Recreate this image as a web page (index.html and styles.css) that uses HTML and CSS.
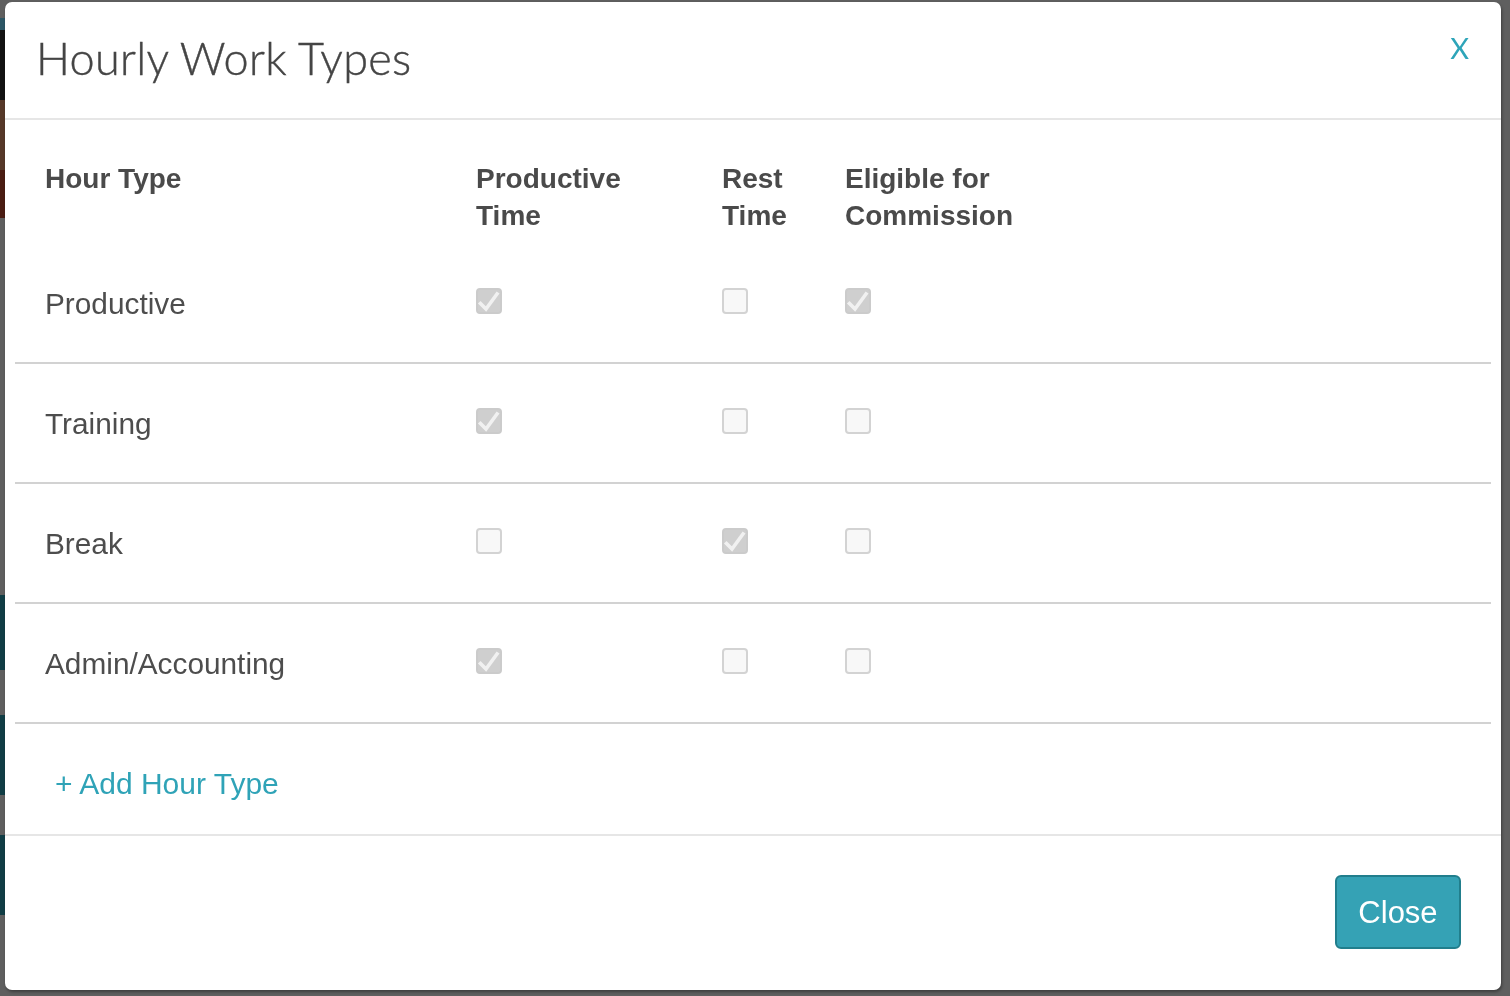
FILE: index.html
```html
<!DOCTYPE html>
<html lang="en">
<head>
<meta charset="utf-8">
<title>Hourly Work Types</title>
<link rel="stylesheet" href="styles.css">
</head>
<body>
<div class="page-under">
  <div class="strip">
    <div class="blk b-grey" style="height:18px"></div>
    <div class="blk b-blue" style="height:12px"></div>
    <div class="blk b-black" style="height:70px"></div>
    <div class="blk b-brown" style="height:70px"></div>
    <div class="blk b-red" style="height:48px"></div>
    <div class="blk b-grey" style="height:377px"></div>
    <div class="blk b-teal" style="height:75px"></div>
    <div class="blk b-grey" style="height:45px"></div>
    <div class="blk b-teal" style="height:80px"></div>
    <div class="blk b-grey" style="height:40px"></div>
    <div class="blk b-teal" style="height:80px"></div>
  </div>
</div>

<div class="modal">
  <div class="modal-header">
    <h1 class="modal-title">Hourly Work Types</h1>
    <button class="modal-x" type="button">X</button>
  </div>

  <div class="modal-body">
    <div class="trow thead">
      <div class="cell first">Hour Type</div>
      <div class="cell">Productive<br>Time</div>
      <div class="cell">Rest<br>Time</div>
      <div class="cell">Eligible for<br>Commission</div>
    </div>

    <div class="trow">
      <div class="cell first name">Productive</div>
      <div class="cell"><span class="cb on"><svg viewBox="0 0 26 26"><polyline points="4.5,15.5 10,21 21,6"/></svg></span></div>
      <div class="cell"><span class="cb"></span></div>
      <div class="cell"><span class="cb on"><svg viewBox="0 0 26 26"><polyline points="4.5,15.5 10,21 21,6"/></svg></span></div>
    </div>

    <div class="trow">
      <div class="cell first name">Training</div>
      <div class="cell"><span class="cb on"><svg viewBox="0 0 26 26"><polyline points="4.5,15.5 10,21 21,6"/></svg></span></div>
      <div class="cell"><span class="cb"></span></div>
      <div class="cell"><span class="cb"></span></div>
    </div>

    <div class="trow">
      <div class="cell first name">Break</div>
      <div class="cell"><span class="cb"></span></div>
      <div class="cell"><span class="cb on"><svg viewBox="0 0 26 26"><polyline points="4.5,15.5 10,21 21,6"/></svg></span></div>
      <div class="cell"><span class="cb"></span></div>
    </div>

    <div class="trow">
      <div class="cell first name">Admin/Accounting</div>
      <div class="cell"><span class="cb on"><svg viewBox="0 0 26 26"><polyline points="4.5,15.5 10,21 21,6"/></svg></span></div>
      <div class="cell"><span class="cb"></span></div>
      <div class="cell"><span class="cb"></span></div>
    </div>

    <div class="add-row">
      <a class="add-link" href="#">+ Add Hour Type</a>
    </div>
  </div>

  <div class="modal-footer">
    <button class="btn-close" type="button">Close</button>
  </div>
</div>
</body>
</html>
```

FILE: styles.css
```css
* { box-sizing: border-box; }

html, body {
  margin: 0;
  padding: 0;
  height: 100%;
}

body {
  background: #5f5f5f;
  font-family: "Liberation Sans", Arial, sans-serif;
  overflow: hidden;
}

.page-under {
  display: flex;
  height: 100%;
}

.strip {
  width: 6px;
  display: flex;
  flex-direction: column;
}

.blk { flex: none; }
.b-grey { background: #5f5f5f; }
.b-blue { background: #2c5665; }
.b-black { background: #121212; }
.b-brown { background: #563828; }
.b-red { background: #4a1c12; }
.b-teal { background: #103d45; }

.modal {
  position: fixed;
  left: 5px;
  top: 2px;
  width: 1496px;
  height: 988px;
  background: #fff;
  border-radius: 7px;
  box-shadow: 1px 2px 3px rgba(0, 0, 0, 0.35);
  display: flex;
  flex-direction: column;
  overflow: hidden;
}

.modal-header {
  height: 118px;
  flex: none;
  border-bottom: 2px solid #e6e6e6;
  display: flex;
  justify-content: space-between;
  align-items: flex-start;
  padding: 29px 31px 0 31px;
}

.modal-title {
  margin: 0;
  font-family: Lato, "Open Sans", sans-serif;
  font-weight: 300;
  font-size: 45px;
  line-height: 1.2;
  color: #454545;
  letter-spacing: 0.3px;
  -webkit-text-stroke: 0.4px #454545;
}

.modal-x {
  margin: 0 1px 0 0;
  padding: 0;
  border: 0;
  background: none;
  font-family: Lato, "Open Sans", sans-serif;
  font-weight: 400;
  font-size: 29px;
  line-height: 1.2;
  color: #2ea5b9;
  cursor: pointer;
}

.modal-body {
  flex: none;
  padding: 0 10px;
}

.trow {
  display: grid;
  grid-template-columns: 461px 246px 123px 1fr;
  height: 120px;
  align-items: center;
  border-bottom: 2px solid #d2d2d2;
  color: #4d4d4d;
  font-size: 29.8px;
}

.trow.thead {
  height: 124px;
  border-bottom: 0;
  align-items: start;
  padding-top: 40px;
  font-size: 28px;
  font-weight: bold;
  color: #4a4a4a;
}

.cell.first {
  padding-left: 30px;
}

.cell { line-height: 1.2; }
.cell.name { padding-top: 2px; }
.thead .cell { line-height: 37px; }

.cb {
  display: block;
  width: 26px;
  height: 26px;
  border: 2px solid #d3d3d3;
  border-radius: 4px;
  background: #f8f8f8;
  margin-bottom: 4px;
}

.cb.on {
  background: #cfcfcf;
  border-color: #cbcbcb;
}

.cb svg {
  display: block;
  width: 26px;
  height: 26px;
  margin: -2px;
}

.cb svg polyline {
  fill: none;
  stroke: #f1f1f1;
  stroke-width: 3.6;
  stroke-linecap: square;
  stroke-linejoin: miter;
}

.add-row {
  height: 110px;
  display: flex;
  align-items: center;
  padding: 10px 0 0 40px;
}

.add-link {
  color: #2fa3b7;
  text-decoration: none;
  font-size: 30px;
  line-height: 1.2;
}

.modal-footer {
  flex: 1;
  border-top: 2px solid #e6e6e6;
  display: flex;
  justify-content: flex-end;
  align-items: flex-start;
  padding: 39px 40px 0 0;
}

.btn-close {
  width: 126px;
  height: 74px;
  background: #35a2b5;
  border: 2px solid #217e8c;
  border-radius: 6px;
  color: #fff;
  font-family: "Liberation Sans", Arial, sans-serif;
  font-size: 31px;
  padding: 2px 0 0 0;
  cursor: pointer;
}
```
